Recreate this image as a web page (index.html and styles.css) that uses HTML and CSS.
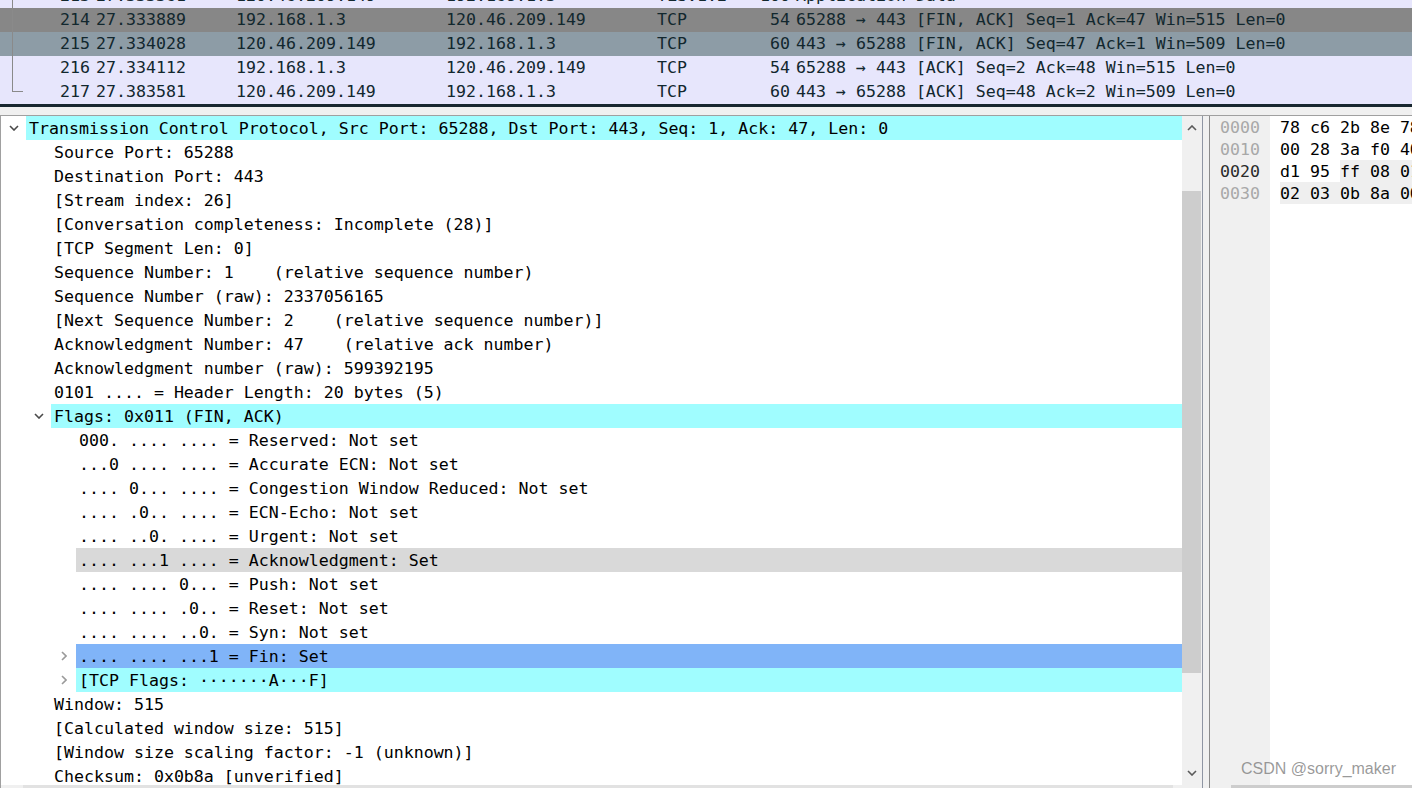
FILE: index.html
```html
<!DOCTYPE html>
<html>
<head>
<meta charset="utf-8">
<link rel="stylesheet" href="styles.css">
</head>
<body>
<div class="app">
  <div class="plist">
    <div class="prow lav first"><div class="rel"></div><div class="c-no">213</div><div class="c-time">27.333361</div><div class="c-src">120.46.209.149</div><div class="c-dst">192.168.1.3</div><div class="c-proto">TLSv1.2</div><div class="c-len">100</div><div class="c-info">Application Data</div></div>
    <div class="prow gray"><div class="rel"></div><div class="c-no">214</div><div class="c-time">27.333889</div><div class="c-src">192.168.1.3</div><div class="c-dst">120.46.209.149</div><div class="c-proto">TCP</div><div class="c-len">54</div><div class="c-info">65288 → 443 [FIN, ACK] Seq=1 Ack=47 Win=515 Len=0</div></div>
    <div class="prow slate"><div class="rel"></div><div class="c-no">215</div><div class="c-time">27.334028</div><div class="c-src">120.46.209.149</div><div class="c-dst">192.168.1.3</div><div class="c-proto">TCP</div><div class="c-len">60</div><div class="c-info">443 → 65288 [FIN, ACK] Seq=47 Ack=1 Win=509 Len=0</div></div>
    <div class="prow lav"><div class="rel"></div><div class="c-no">216</div><div class="c-time">27.334112</div><div class="c-src">192.168.1.3</div><div class="c-dst">120.46.209.149</div><div class="c-proto">TCP</div><div class="c-len">54</div><div class="c-info">65288 → 443 [ACK] Seq=2 Ack=48 Win=515 Len=0</div></div>
    <div class="prow lav"><div class="rel end"></div><div class="c-no">217</div><div class="c-time">27.383581</div><div class="c-src">120.46.209.149</div><div class="c-dst">192.168.1.3</div><div class="c-proto">TCP</div><div class="c-len">60</div><div class="c-info">443 → 65288 [ACK] Seq=48 Ack=2 Win=509 Len=0</div></div>
  </div>
  <div class="darkbar"></div>
  <div class="splitter"></div>
  <div class="panes">
    <div class="detail">
      <div class="detail-main">
        <div class="tree">
          <div class="row"><div class="tw"><svg width="10" height="6" viewBox="0 0 10 6"><polyline points="1,1 5,5 9,1" class="chev"/></svg></div><div class="lbl hl-cyan">Transmission Control Protocol, Src Port: 65288, Dst Port: 443, Seq: 1, Ack: 47, Len: 0</div></div>
          <div class="row l1"><div class="tw"></div><div class="lbl">Source Port: 65288</div></div>
          <div class="row l1"><div class="tw"></div><div class="lbl">Destination Port: 443</div></div>
          <div class="row l1"><div class="tw"></div><div class="lbl">[Stream index: 26]</div></div>
          <div class="row l1"><div class="tw"></div><div class="lbl">[Conversation completeness: Incomplete (28)]</div></div>
          <div class="row l1"><div class="tw"></div><div class="lbl">[TCP Segment Len: 0]</div></div>
          <div class="row l1"><div class="tw"></div><div class="lbl">Sequence Number: 1    (relative sequence number)</div></div>
          <div class="row l1"><div class="tw"></div><div class="lbl">Sequence Number (raw): 2337056165</div></div>
          <div class="row l1"><div class="tw"></div><div class="lbl">[Next Sequence Number: 2    (relative sequence number)]</div></div>
          <div class="row l1"><div class="tw"></div><div class="lbl">Acknowledgment Number: 47    (relative ack number)</div></div>
          <div class="row l1"><div class="tw"></div><div class="lbl">Acknowledgment number (raw): 599392195</div></div>
          <div class="row l1"><div class="tw"></div><div class="lbl">0101 .... = Header Length: 20 bytes (5)</div></div>
          <div class="row l1"><div class="tw"><svg width="10" height="6" viewBox="0 0 10 6"><polyline points="1,1 5,5 9,1" class="chev"/></svg></div><div class="lbl hl-cyan">Flags: 0x011 (FIN, ACK)</div></div>
          <div class="row l2"><div class="tw"></div><div class="lbl">000. .... .... = Reserved: Not set</div></div>
          <div class="row l2"><div class="tw"></div><div class="lbl">...0 .... .... = Accurate ECN: Not set</div></div>
          <div class="row l2"><div class="tw"></div><div class="lbl">.... 0... .... = Congestion Window Reduced: Not set</div></div>
          <div class="row l2"><div class="tw"></div><div class="lbl">.... .0.. .... = ECN-Echo: Not set</div></div>
          <div class="row l2"><div class="tw"></div><div class="lbl">.... ..0. .... = Urgent: Not set</div></div>
          <div class="row l2"><div class="tw"></div><div class="lbl hl-gray">.... ...1 .... = Acknowledgment: Set</div></div>
          <div class="row l2"><div class="tw"></div><div class="lbl">.... .... 0... = Push: Not set</div></div>
          <div class="row l2"><div class="tw"></div><div class="lbl">.... .... .0.. = Reset: Not set</div></div>
          <div class="row l2"><div class="tw"></div><div class="lbl">.... .... ..0. = Syn: Not set</div></div>
          <div class="row l2"><div class="tw"><svg width="6" height="10" viewBox="0 0 6 10"><polyline points="1,1 5,5 1,9" class="chev light"/></svg></div><div class="lbl hl-blue">.... .... ...1 = Fin: Set</div></div>
          <div class="row l2"><div class="tw"><svg width="6" height="10" viewBox="0 0 6 10"><polyline points="1,1 5,5 1,9" class="chev light"/></svg></div><div class="lbl hl-cyan">[TCP Flags: ·······A···F]</div></div>
          <div class="row l1"><div class="tw"></div><div class="lbl">Window: 515</div></div>
          <div class="row l1"><div class="tw"></div><div class="lbl">[Calculated window size: 515]</div></div>
          <div class="row l1"><div class="tw"></div><div class="lbl">[Window size scaling factor: -1 (unknown)]</div></div>
          <div class="row l1"><div class="tw"></div><div class="lbl">Checksum: 0x0b8a [unverified]</div></div>
        </div>
        <div class="vscroll">
          <div class="sbtn"><svg width="10" height="6" viewBox="0 0 10 6"><polyline points="1,5 5,1 9,5" class="chev dark"/></svg></div>
          <div class="track"><div class="thumb"></div></div>
          <div class="sbtn"><svg width="10" height="6" viewBox="0 0 10 6"><polyline points="1,1 5,5 9,1" class="chev dark"/></svg></div>
        </div>
      </div>
      <div class="hscroll"><div class="hthumb tree-thumb"></div></div>
    </div>
    <div class="divider"></div>
    <div class="hex">
      <div class="hex-main">
        <div class="offsets">
          <div class="hrow">0000</div>
          <div class="hrow">0010</div>
          <div class="hrow cur">0020</div>
          <div class="hrow">0030</div>
        </div>
        <div class="bytes">
          <div class="hrow">78 c6 2b 8e 78 4e 3c 91 80 ea 5d 42 08 00 45 00</div>
          <div class="hrow">00 28 3a f0 40 00 80 06 00 00 c0 a8 01 03 78 2e</div>
          <div class="hrow">d1 95 <span class="hb">ff 08 01 bb 8b 4c 5e b5 23 ba 5d 83 50 11</span></div>
          <div class="hrow"><span class="hb">02 03 0b 8a 00 00</span></div>
        </div>
      </div>
      <div class="hscroll"><div class="hthumb hex-thumb"></div></div>
    </div>
  </div>
  <div class="watermark">CSDN @sorry_maker</div>
</div>
</body>
</html>
```
FILE: styles.css
```css
html, body {
  margin: 0;
  padding: 0;
  background: #ffffff;
}
.app {
  position: relative;
  width: 1412px;
  height: 788px;
  overflow: hidden;
  font-family: "DejaVu Sans Mono", "Liberation Mono", monospace;
  font-size: 16.6px;
  color: #000;
  display: flex;
  flex-direction: column;
}
/* packet list */
.plist {
  height: 104px;
  overflow: hidden;
  flex: none;
  background: #e7e6fc;
}
.prow {
  display: flex;
  height: 24px;
  line-height: 24px;
  white-space: pre;
  color: #12272e;
}
.prow.first { margin-top: -16px; }
.prow.lav { background: #e7e6fc; }
.prow.gray { background: #878787; }
.prow.slate { background: #8d9ca6; }
.rel {
  position: relative;
  width: 22px;
  flex: none;
}
.rel::before {
  content: "";
  position: absolute;
  left: 12px;
  top: 0;
  bottom: 0;
  border-left: 1px solid #8a8a8a;
}
.rel.end::before {
  bottom: auto;
  height: 11px;
  width: 10px;
  border-bottom: 1px solid #8a8a8a;
}
.c-no { width: 68px; text-align: right; flex: none; }
.c-time { margin-left: 6px; width: 140px; flex: none; }
.c-src { width: 210px; flex: none; }
.c-dst { width: 211px; flex: none; }
.c-proto { width: 83px; flex: none; }
.c-len { width: 50px; text-align: right; flex: none; }
.c-info { margin-left: 6px; }

.darkbar {
  height: 3px;
  background: #18272f;
  flex: none;
}
.splitter {
  height: 8px;
  background: #f0f0f0;
  flex: none;
}
.panes {
  flex: 1;
  display: flex;
  border-top: 1px solid #a0a0a0;
  min-height: 0;
}
.detail {
  width: 1201px;
  flex: none;
  border-left: 1px solid #a0a0a0;
  display: flex;
  flex-direction: column;
}
.detail-main {
  flex: 1;
  display: flex;
  min-height: 0;
}
.tree {
  flex: 1;
  overflow: hidden;
}
.row {
  display: flex;
  height: 24px;
}
.row.l1 { padding-left: 25px; }
.row.l2 { padding-left: 50px; }
.tw {
  width: 25px;
  flex: none;
  display: flex;
  align-items: center;
  justify-content: center;
}
.lbl {
  flex: 1;
  padding-left: 3px;
  padding-top: 1px;
  line-height: 23px;
  white-space: pre;
}
.hl-cyan { background: #a0fdff; }
.hl-gray { background: #d9d9d9; }
.hl-blue { background: #80b4f8; }
.chev {
  fill: none;
  stroke: #4a4a4a;
  stroke-width: 1.6;
}
.chev.light { stroke: #9a9a9a; }
.chev.dark { stroke: #5a5a5a; }

.vscroll {
  width: 20px;
  flex: none;
  background: #f0f0f0;
  display: flex;
  flex-direction: column;
}
.sbtn {
  height: 24px;
  flex: none;
  display: flex;
  align-items: center;
  justify-content: center;
}
.track {
  flex: 1;
}
.thumb {
  margin-top: 51px;
  height: 482px;
  width: 19px;
  background: #cdcdcd;
}
.hscroll {
  height: 3px;
  flex: none;
  background: #f0f0f0;
}
.hthumb {
  height: 3px;
  background: #d6d6d6;
}
.tree-thumb { margin-left: 22px; width: 1150px; background: #e2e2e2; }
.hex-thumb { margin-left: 21px; background: #cdcdcd; }

.divider {
  width: 6px;
  flex: none;
  background: #f0f0f0;
  border-left: 1px solid #8e95a3;
  border-right: 1px solid #8a8a8a;
}
.hex {
  flex: 1;
  display: flex;
  flex-direction: column;
  min-width: 0;
}
.hex-main {
  flex: 1;
  display: flex;
  min-height: 0;
  overflow: hidden;
}
.offsets {
  width: 50px;
  padding-left: 10px;
  flex: none;
  background: #f0f0f0;
  color: #a8a8a8;
}
.offsets .cur { color: #2a2a2a; }
.bytes {
  padding-left: 10px;
  flex: 1;
}
.hrow {
  height: 22px;
  padding-top: 1px;
  line-height: 21px;
  box-sizing: border-box;
  white-space: pre;
}
.hb { background: #efefef; padding: 2px 0 1px; }

.watermark {
  position: absolute;
  right: 16px;
  bottom: 10px;
  font-family: "Liberation Sans", Arial, sans-serif;
  font-size: 16px;
  line-height: 18px;
  color: rgba(120, 120, 120, 0.75);
}
```
